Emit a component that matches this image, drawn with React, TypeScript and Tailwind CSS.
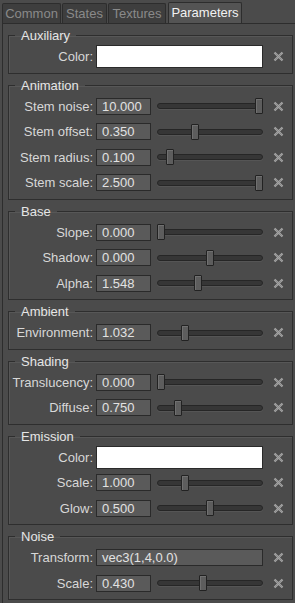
import React from 'react';

type Row =
  | { kind: 'color'; label: string }
  | { kind: 'text'; label: string; value: string }
  | { kind: 'slider'; label: string; value: string; pos: number };

interface Group {
  title: string;
  rows: Row[];
}

const groups: Group[] = [
  { title: 'Auxiliary', rows: [{ kind: 'color', label: 'Color:' }] },
  {
    title: 'Animation',
    rows: [
      { kind: 'slider', label: 'Stem noise:', value: '10.000', pos: 1 },
      { kind: 'slider', label: 'Stem offset:', value: '0.350', pos: 0.347 },
      { kind: 'slider', label: 'Stem radius:', value: '0.100', pos: 0.092 },
      { kind: 'slider', label: 'Stem scale:', value: '2.500', pos: 1 },
    ],
  },
  {
    title: 'Base',
    rows: [
      { kind: 'slider', label: 'Slope:', value: '0.000', pos: 0 },
      { kind: 'slider', label: 'Shadow:', value: '0.000', pos: 0.5 },
      { kind: 'slider', label: 'Alpha:', value: '1.548', pos: 0.378 },
    ],
  },
  {
    title: 'Ambient',
    rows: [{ kind: 'slider', label: 'Environment:', value: '1.032', pos: 0.245 }],
  },
  {
    title: 'Shading',
    rows: [
      { kind: 'slider', label: 'Translucency:', value: '0.000', pos: 0 },
      { kind: 'slider', label: 'Diffuse:', value: '0.750', pos: 0.173 },
    ],
  },
  {
    title: 'Emission',
    rows: [
      { kind: 'color', label: 'Color:' },
      { kind: 'slider', label: 'Scale:', value: '1.000', pos: 0.245 },
      { kind: 'slider', label: 'Glow:', value: '0.500', pos: 0.5 },
    ],
  },
  {
    title: 'Noise',
    rows: [
      { kind: 'text', label: 'Transform:', value: 'vec3(1,4,0.0)' },
      { kind: 'slider', label: 'Scale:', value: '0.430', pos: 0.43 },
    ],
  },
];

const tabs = [
  { name: 'Common', w: 'w-[59px]', ml: 'ml-0' },
  { name: 'States', w: 'w-[45px]', ml: 'ml-[1px]' },
  { name: 'Textures', w: 'w-[58px]', ml: 'ml-[1px]' },
  { name: 'Parameters', w: 'w-[74px]', ml: 'ml-[2px]', active: true },
];

function ClearIcon() {
  return (
    <svg width="11" height="11" viewBox="0 0 11 11" className="shrink-0">
      <path d="M1.5 1.5L9.5 9.5M9.5 1.5L1.5 9.5" stroke="#a6a6a6" strokeWidth="2.2" />
      <path
        d="M1.5 1.5L9.5 9.5M9.5 1.5L1.5 9.5"
        stroke="#6e6e6e"
        strokeWidth="0.8"
        strokeDasharray="1 1"
      />
    </svg>
  );
}

function Slider({ pos }: { pos: number }) {
  return (
    <div className="relative ml-[6px] w-[106px] h-[16px] flex items-center">
      <div className="w-full h-[6px] rounded-full bg-[#363636] border border-[#262626] shadow-[0_1px_0_#555]" />
      <div
        className="absolute top-0 w-[8px] h-[16px] rounded-[1px] bg-[#5d5d5d] border border-[#222] shadow-[inset_1px_1px_0_#707070]"
        style={{ left: `${Math.round(pos * 98)}px` }}
      />
    </div>
  );
}

function ParamRow({ row }: { row: Row }) {
  return (
    <div className="flex items-center h-[25.5px]">
      <span className="w-[84px] text-right whitespace-nowrap text-[#d8d8d8]">{row.label}</span>
      {row.kind === 'color' && (
        <div className="ml-[3px] w-[167px] h-[23px] bg-white border border-[#2a2a2a]" />
      )}
      {row.kind === 'text' && (
        <div className="ml-[3px] w-[167px] h-[17px] pl-[5px] leading-[15px] bg-[#5a5a5a] border border-[#2a2a2a] text-[#e2e2e2]">
          {row.value}
        </div>
      )}
      {row.kind === 'slider' && (
        <>
          <div className="ml-[3px] w-[55px] h-[17px] pl-[5px] leading-[15px] bg-[#5a5a5a] border border-[#2a2a2a] text-[#e2e2e2]">
            {row.value}
          </div>
          <Slider pos={row.pos} />
        </>
      )}
      <div className="ml-[10px] flex items-center">
        <ClearIcon />
      </div>
    </div>
  );
}

function GroupBox({ group }: { group: Group }) {
  return (
    <fieldset className="w-[285px] border border-[#2e2e2e] shadow-[inset_1px_1px_0_#575757] px-0 pt-0 pb-[3px] m-0 mb-[3px]">
      <legend className="ml-[6px] px-[6px] h-[17px] leading-[17px] text-[#e6e6e6]">
        {group.title}
      </legend>
      {group.rows.map((row, i) => (
        <ParamRow key={i} row={row} />
      ))}
    </fieldset>
  );
}

export default function App() {
  return (
    <div
      className="w-[295px] h-[603px] overflow-hidden bg-[#4b4b4b] text-[13px]"
      style={{ fontFamily: '"Liberation Sans", Arial, sans-serif' }}
    >
      <div className="flex items-end h-[23px] pl-[2px]">
        {tabs.map((t) => (
          <div
            key={t.name}
            className={`${t.w} ${t.ml} flex items-center justify-center border border-b-0 border-[#2d2d2d] rounded-t-[2px] ${
              t.active
                ? 'h-[21px] bg-[#545454] text-[#f2f2f2]'
                : 'h-[20px] bg-[#3e3e3e] text-[#8a8a8a]'
            }`}
          >
            {t.name}
          </div>
        ))}
      </div>
      <div className="ml-[2px] w-[300px] h-[580px] border-l border-t border-[#2d2d2d] pl-[5px] pt-[3px]">
        {groups.map((g) => (
          <GroupBox key={g.title} group={g} />
        ))}
      </div>
    </div>
  );
}
